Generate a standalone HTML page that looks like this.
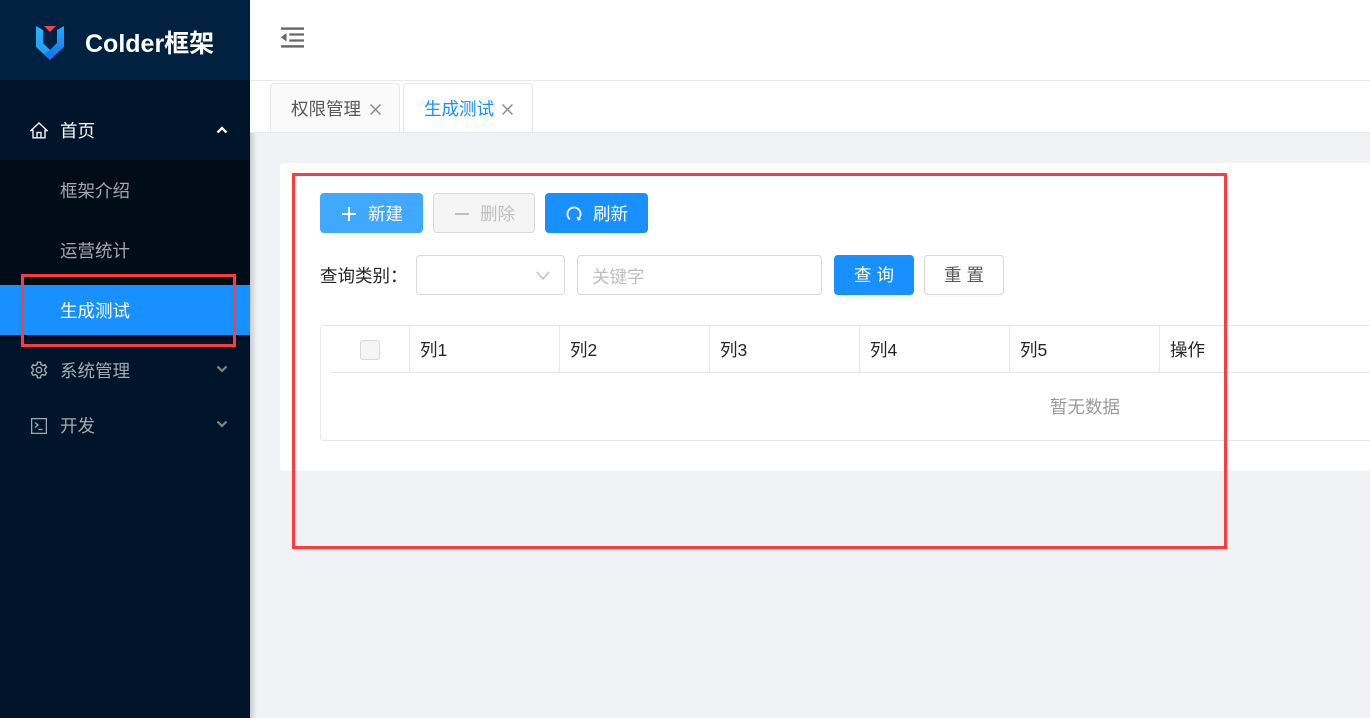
<!DOCTYPE html>
<html lang="zh">
<head>
<meta charset="utf-8">
<title>Colder框架</title>
<style>
*{box-sizing:border-box;margin:0;padding:0}
html,body{width:1370px;height:718px;overflow:hidden;background:#f0f2f5;font-family:"Liberation Sans","Noto Sans CJK SC",sans-serif;font-size:17.5px}
.a{position:absolute;white-space:nowrap}
.t{line-height:24px;height:24px}
.btn{position:absolute;border-radius:4px;text-align:center;white-space:nowrap}
.th{position:absolute;top:338px;line-height:24px;color:#262626;font-size:17.5px;white-space:nowrap}
.vl{position:absolute;top:326px;width:1px;height:46px;background:#e8e8e8}
</style>
</head>
<body>
<!-- sidebar -->
<div class="a" style="left:0;top:0;width:250px;height:718px;background:#001529"></div>
<div class="a" style="left:0;top:0;width:250px;height:80px;background:#002140"></div>
<div class="a" style="left:0;top:160px;width:250px;height:180px;background:#000c17"></div>
<div class="a" style="left:0;top:285px;width:250px;height:50px;background:#1890ff"></div>
<div class="a" style="left:250px;top:80px;width:7px;height:638px;background:linear-gradient(90deg,#c9ccd2,#f0f2f5)"></div>

<!-- logo -->
<svg class="a" style="left:36px;top:26px" width="28" height="34" viewBox="0 0 28 34">
<defs>
<linearGradient id="g1" x1="0" y1="0" x2="0" y2="1"><stop offset="0" stop-color="#2bb2ff"/><stop offset="1" stop-color="#1f9bf8"/></linearGradient>
<linearGradient id="g2" x1="0" y1="0" x2="0" y2="1"><stop offset="0" stop-color="#27a8ff"/><stop offset="1" stop-color="#1472ea"/></linearGradient>
</defs>
<path d="M0 0L7 4V17L14 24V34L0 21Z" fill="url(#g1)"/>
<path d="M28 0L21 4V17L14 24L8 28L14 34L28 21Z" fill="url(#g2)"/>
<path d="M8 0H20L14 6Z" fill="#f5444e"/>
</svg>
<div class="a" style="left:85px;top:27px;line-height:34px;color:#fff;font-size:25px;font-weight:bold">Colder框架</div>

<!-- menu -->
<svg class="a" style="left:30px;top:122px" width="18" height="17" viewBox="0 0 18 17" fill="none" stroke="#f2f4f6" stroke-width="1.400">
<path d="M1 8.500L9 1L17 8.500H15V15.800H3V8.500Z"/><path d="M7 15.800V10.500H11V15.800"/>
</svg>
<div class="a t" style="left:60px;top:119px;color:#fff">首页</div>
<svg class="a" style="left:216px;top:126px" width="12" height="8" viewBox="0 0 12 8" fill="none" stroke="#fff" stroke-width="2.300"><path d="M1.500 6.500L6 2L10.500 6.500"/></svg>
<div class="a t" style="left:60px;top:179px;color:#a3a9af">框架介绍</div>
<div class="a t" style="left:60px;top:239px;color:#a3a9af">运营统计</div>
<div class="a t" style="left:60px;top:299px;color:#fff">生成测试</div>

<svg class="a" style="left:30px;top:361px" width="18" height="18" viewBox="0 0 18 18" fill="none" stroke="#a3a9af" stroke-width="1.400">
<path d="M7.500 1.200H10.500L11 3.500L12.800 4.500L15 3.700L16.500 6.300L14.800 7.900V10.100L16.500 11.700L15 14.300L12.800 13.500L11 14.500L10.500 16.800H7.500L7 14.500L5.200 13.500L3 14.300L1.500 11.700L3.200 10.100V7.900L1.500 6.300L3 3.700L5.200 4.500L7 3.500Z"/><circle cx="9" cy="9" r="2.700"/>
</svg>
<div class="a t" style="left:60px;top:359px;color:#a3a9af">系统管理</div>
<svg class="a" style="left:216px;top:365px" width="12" height="8" viewBox="0 0 12 8" fill="none" stroke="#7d858d" stroke-width="2.200"><path d="M1.500 1.500L6 6L10.500 1.500"/></svg>

<svg class="a" style="left:31px;top:418px" width="16" height="16" viewBox="0 0 16 16" fill="none" stroke="#a3a9af" stroke-width="1.300">
<rect x=".6" y=".6" width="14.800" height="14.800"/><path d="M4 4.500L7 7L4 9.500"/><path d="M7.500 11.500H11.500"/>
</svg>
<div class="a t" style="left:60px;top:414px;color:#a3a9af">开发</div>
<svg class="a" style="left:216px;top:420px" width="12" height="8" viewBox="0 0 12 8" fill="none" stroke="#7d858d" stroke-width="2.200"><path d="M1.500 1.500L6 6L10.500 1.500"/></svg>

<!-- header -->
<div class="a" style="left:250px;top:0;width:1120px;height:81px;background:#fff;border-bottom:1px solid #e8eaee"></div>
<svg class="a" style="left:281px;top:27px" width="23" height="21" viewBox="0 0 23 21" fill="#666">
<rect x="0" y=".4" width="23" height="2.400"/><rect x="8.300" y="6.400" width="14.700" height="2.200"/><rect x="8.300" y="12.400" width="14.700" height="2.200"/><rect x="0" y="18.200" width="23" height="2.400"/><path d="M0 10.300L5.500 6V14.600Z"/>
</svg>

<!-- tabs -->
<div class="a" style="left:250px;top:81px;width:1120px;height:52px;background:#fff;border-bottom:1px solid #e8e8e8"></div>
<div class="a" style="left:270px;top:83px;width:130px;height:49px;background:#fafafa;border:1px solid #e8e8e8;border-bottom:0;border-radius:4px 4px 0 0"></div>
<div class="a" style="left:403px;top:83px;width:130px;height:49px;background:#fff;border:1px solid #e8e8e8;border-bottom:0;border-radius:4px 4px 0 0"></div>
<div class="a t" style="left:291px;top:97px;color:#595959">权限管理</div>
<svg class="a" style="left:370px;top:104px" width="11" height="11" viewBox="0 0 11 11" stroke="#8c8c8c" stroke-width="1.500"><path d="M.5 .5L10.500 10.500M10.500 .5L.5 10.500"/></svg>
<div class="a t" style="left:424px;top:97px;color:#1890ff">生成测试</div>
<svg class="a" style="left:502px;top:104px" width="11" height="11" viewBox="0 0 11 11" stroke="#8c8c8c" stroke-width="1.500"><path d="M.5 .5L10.500 10.500M10.500 .5L.5 10.500"/></svg>

<!-- content card -->
<div class="a" style="left:280px;top:163px;width:1090px;height:308px;background:#fff;border-radius:4px 0 0 4px"></div>

<!-- toolbar -->
<div class="btn" style="left:320px;top:193px;width:103px;height:40px;background:#40a9ff"></div>
<svg class="a" style="left:342px;top:207px" width="14" height="14" viewBox="0 0 14 14" fill="#fff"><rect x="6" y="0" width="2" height="14"/><rect x="0" y="6" width="14" height="2"/></svg>
<div class="a t" style="left:368px;top:202px;color:#fff">新建</div>

<div class="btn" style="left:433px;top:193px;width:102px;height:40px;background:#f5f5f5;border:1px solid #d9d9d9"></div>
<div class="a" style="left:455px;top:213px;width:14px;height:2px;background:#bfbfbf"></div>
<div class="a t" style="left:480px;top:202px;color:#bfbfbf">删除</div>

<div class="btn" style="left:545px;top:193px;width:103px;height:40px;background:#1890ff"></div>
<svg class="a" style="left:566px;top:206px" width="16" height="16" viewBox="0 0 17 17" fill="none" stroke="#fff" stroke-width="1.900"><path d="M4.300 14.200A7 7 0 1 1 12.700 14.200"/><path d="M12 11.500L12.900 14.500L15.500 14.300" stroke-width="1.500"/></svg>
<div class="a t" style="left:593px;top:202px;color:#fff">刷新</div>

<!-- search -->
<div class="a t" style="left:320px;top:264px;color:#262626">查询类别：</div>
<div class="a" style="left:416px;top:255px;width:149px;height:40px;background:#fff;border:1px solid #d9d9d9;border-radius:4px"></div>
<svg class="a" style="left:536px;top:271px" width="14" height="9" viewBox="0 0 14 9" fill="none" stroke="#bfbfbf" stroke-width="1.400"><path d="M.8 .8L7 8L13.200 .8"/></svg>
<div class="a" style="left:577px;top:255px;width:245px;height:40px;background:#fff;border:1px solid #d9d9d9;border-radius:4px"></div>
<div class="a t" style="left:592px;top:265px;color:#bfbfbf">关键字</div>
<div class="btn" style="left:834px;top:255px;width:80px;height:40px;line-height:41px;background:#1890ff;color:#fff;letter-spacing:5px;text-indent:5px;box-shadow:0 2px 0 rgba(0,0,0,.03)">查询</div>
<div class="btn" style="left:924px;top:255px;width:80px;height:40px;line-height:39px;background:#fff;border:1px solid #d9d9d9;color:#595959;letter-spacing:5px;text-indent:5px;box-shadow:0 2px 0 rgba(0,0,0,.02)">重置</div>

<!-- table -->
<div class="a" style="left:320px;top:325px;width:1060px;height:116px;border:1px solid #e8e8e8;border-radius:4px"></div>
<div class="a" style="left:331px;top:372px;width:1039px;height:1px;background:#e8e8e8"></div>
<div class="a" style="left:360px;top:340px;width:20px;height:20px;background:#f5f5f5;border:1px solid #d9d9d9;border-radius:3px"></div>
<div class="vl" style="left:409px"></div>
<div class="vl" style="left:559px"></div>
<div class="vl" style="left:709px"></div>
<div class="vl" style="left:859px"></div>
<div class="vl" style="left:1009px"></div>
<div class="vl" style="left:1159px"></div>
<div class="th" style="left:420px">列1</div>
<div class="th" style="left:570px">列2</div>
<div class="th" style="left:720px">列3</div>
<div class="th" style="left:870px">列4</div>
<div class="th" style="left:1020px">列5</div>
<div class="th" style="left:1170px">操作</div>
<div class="a t" style="left:1050px;top:395px;color:#999">暂无数据</div>

<!-- red annotations -->
<div class="a" style="left:21px;top:274px;width:215px;height:73px;border:3px solid #ff3b3b"></div>
<div class="a" style="left:292px;top:173px;width:935px;height:376px;border:3px solid #ff3b3b"></div>
</body>
</html>
